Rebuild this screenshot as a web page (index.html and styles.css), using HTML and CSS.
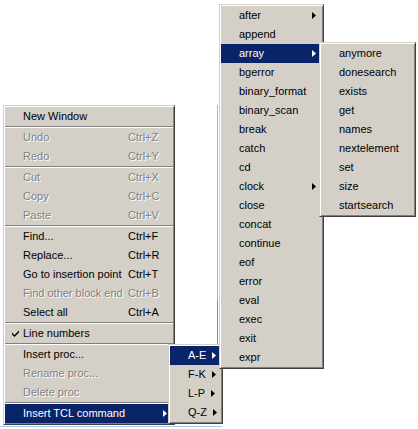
FILE: index.html
```html
<!DOCTYPE html>
<html>
<head>
<meta charset="utf-8">
<link rel="stylesheet" href="styles.css">
</head>
<body>
<div class="screen">
  <div class="under-line"></div>
  <div class="under-line under-blue"></div>
  <div class="under-bottom"></div>

  <div class="menu menu-main">
    <div class="item"><span class="mark"></span><span class="label">New Window</span><span class="key"></span></div>
    <div class="sep"></div>
    <div class="item off"><span class="mark"></span><span class="label">Undo</span><span class="key">Ctrl+Z</span></div>
    <div class="item off"><span class="mark"></span><span class="label">Redo</span><span class="key">Ctrl+Y</span></div>
    <div class="sep"></div>
    <div class="item off"><span class="mark"></span><span class="label">Cut</span><span class="key">Ctrl+X</span></div>
    <div class="item off"><span class="mark"></span><span class="label">Copy</span><span class="key">Ctrl+C</span></div>
    <div class="item off"><span class="mark"></span><span class="label">Paste</span><span class="key">Ctrl+V</span></div>
    <div class="sep"></div>
    <div class="item"><span class="mark"></span><span class="label">Find...</span><span class="key">Ctrl+F</span></div>
    <div class="item"><span class="mark"></span><span class="label">Replace...</span><span class="key">Ctrl+R</span></div>
    <div class="item"><span class="mark"></span><span class="label">Go to insertion point</span><span class="key">Ctrl+T</span></div>
    <div class="item off"><span class="mark"></span><span class="label">Find other block end</span><span class="key">Ctrl+B</span></div>
    <div class="item"><span class="mark"></span><span class="label">Select all</span><span class="key">Ctrl+A</span></div>
    <div class="sep"></div>
    <div class="item"><span class="mark"><svg class="check" width="7" height="7" viewBox="0 0 7 7"><path d="M0 2.5 L2.5 5 L7 0.5 L7 2.5 L2.5 7 L0 4.5 Z"/></svg></span><span class="label">Line numbers</span><span class="key"></span></div>
    <div class="sep"></div>
    <div class="item"><span class="mark"></span><span class="label">Insert proc...</span><span class="key"></span></div>
    <div class="item off"><span class="mark"></span><span class="label">Rename proc...</span><span class="key"></span></div>
    <div class="item off"><span class="mark"></span><span class="label">Delete proc</span><span class="key"></span></div>
    <div class="sep"></div>
    <div class="item active"><span class="mark"></span><span class="label">Insert TCL command</span><span class="key sub"><svg class="arrow" width="4" height="7" viewBox="0 0 4 7"><path d="M0 0 L4 3.5 L0 7 Z"/></svg></span></div>
  </div>

  <div class="menu menu-range">
    <div class="item active"><span class="mark"></span><span class="label">A-E</span><span class="sub"><svg class="arrow" width="4" height="7" viewBox="0 0 4 7"><path d="M0 0 L4 3.5 L0 7 Z"/></svg></span></div>
    <div class="item"><span class="mark"></span><span class="label">F-K</span><span class="sub"><svg class="arrow" width="4" height="7" viewBox="0 0 4 7"><path d="M0 0 L4 3.5 L0 7 Z"/></svg></span></div>
    <div class="item"><span class="mark"></span><span class="label">L-P</span><span class="sub"><svg class="arrow" width="4" height="7" viewBox="0 0 4 7"><path d="M0 0 L4 3.5 L0 7 Z"/></svg></span></div>
    <div class="item"><span class="mark"></span><span class="label">Q-Z</span><span class="sub"><svg class="arrow" width="4" height="7" viewBox="0 0 4 7"><path d="M0 0 L4 3.5 L0 7 Z"/></svg></span></div>
  </div>

  <div class="menu menu-tcl">
    <div class="item"><span class="mark"></span><span class="label">after</span><span class="sub"><svg class="arrow" width="4" height="7" viewBox="0 0 4 7"><path d="M0 0 L4 3.5 L0 7 Z"/></svg></span></div>
    <div class="item"><span class="mark"></span><span class="label">append</span><span class="sub"></span></div>
    <div class="item active"><span class="mark"></span><span class="label">array</span><span class="sub"><svg class="arrow" width="4" height="7" viewBox="0 0 4 7"><path d="M0 0 L4 3.5 L0 7 Z"/></svg></span></div>
    <div class="item"><span class="mark"></span><span class="label">bgerror</span><span class="sub"></span></div>
    <div class="item"><span class="mark"></span><span class="label">binary_format</span><span class="sub"></span></div>
    <div class="item"><span class="mark"></span><span class="label">binary_scan</span><span class="sub"></span></div>
    <div class="item"><span class="mark"></span><span class="label">break</span><span class="sub"></span></div>
    <div class="item"><span class="mark"></span><span class="label">catch</span><span class="sub"></span></div>
    <div class="item"><span class="mark"></span><span class="label">cd</span><span class="sub"></span></div>
    <div class="item"><span class="mark"></span><span class="label">clock</span><span class="sub"><svg class="arrow" width="4" height="7" viewBox="0 0 4 7"><path d="M0 0 L4 3.5 L0 7 Z"/></svg></span></div>
    <div class="item"><span class="mark"></span><span class="label">close</span><span class="sub"></span></div>
    <div class="item"><span class="mark"></span><span class="label">concat</span><span class="sub"></span></div>
    <div class="item"><span class="mark"></span><span class="label">continue</span><span class="sub"></span></div>
    <div class="item"><span class="mark"></span><span class="label">eof</span><span class="sub"></span></div>
    <div class="item"><span class="mark"></span><span class="label">error</span><span class="sub"></span></div>
    <div class="item"><span class="mark"></span><span class="label">eval</span><span class="sub"></span></div>
    <div class="item"><span class="mark"></span><span class="label">exec</span><span class="sub"></span></div>
    <div class="item"><span class="mark"></span><span class="label">exit</span><span class="sub"></span></div>
    <div class="item"><span class="mark"></span><span class="label">expr</span><span class="sub"></span></div>
  </div>

  <div class="menu menu-array">
    <div class="item"><span class="mark"></span><span class="label">anymore</span></div>
    <div class="item"><span class="mark"></span><span class="label">donesearch</span></div>
    <div class="item"><span class="mark"></span><span class="label">exists</span></div>
    <div class="item"><span class="mark"></span><span class="label">get</span></div>
    <div class="item"><span class="mark"></span><span class="label">names</span></div>
    <div class="item"><span class="mark"></span><span class="label">nextelement</span></div>
    <div class="item"><span class="mark"></span><span class="label">set</span></div>
    <div class="item"><span class="mark"></span><span class="label">size</span></div>
    <div class="item"><span class="mark"></span><span class="label">startsearch</span></div>
  </div>
</div>
</body>
</html>
```

FILE: styles.css
```css
html, body {
  margin: 0;
  padding: 0;
  background: #ffffff;
}

.screen {
  position: relative;
  width: 418px;
  height: 429px;
  overflow: hidden;
  background: #ffffff;
  font-family: "Liberation Sans", Arial, sans-serif;
  font-size: 11px;
  color: #000000;
}

/* traces of the window lying under the menus */
.under-line {
  position: absolute;
  left: 217px;
  top: 105px;
  width: 1px;
  height: 195px;
  background: #b4b4b4;
}

.under-blue {
  top: 300px;
  height: 45px;
  background: #6d8fc2;
}

.under-bottom {
  position: absolute;
  left: 0;
  top: 426px;
  width: 222px;
  height: 1px;
  background: #a9c6ec;
}

/* popup menus */
.menu {
  position: absolute;
  box-sizing: border-box;
  background: #d4d0c8;
  border: 1px solid;
  border-color: #d4d0c8 #404040 #404040 #d4d0c8;
  box-shadow: inset 1px 1px 0 #ffffff, inset -1px -1px 0 #808080;
  padding: 1px;
}

.menu-main  { left: 3px;   top: 105px; width: 172px; }
.menu-range { left: 168px; top: 344px; width: 55px;  }
.menu-tcl   { left: 219px; top: 4px;   width: 105px; }
.menu-array { left: 319px; top: 42px;  width: 97px;  }

.item {
  display: flex;
  align-items: center;
  height: 19px;
  line-height: 19px;
  white-space: nowrap;
}

.mark {
  flex: none;
  width: 18px;
  display: flex;
  align-items: center;
}

.label {
  flex: 1;
}

.key {
  flex: none;
  width: 45px;
}

.sub {
  flex: none;
  box-sizing: border-box;
  width: 16px;
  display: flex;
  justify-content: flex-end;
  align-items: center;
  padding-right: 6px;
}

.key.sub {
  width: 45px;
}

.arrow {
  display: block;
  fill: #000000;
}

.check {
  display: block;
  margin-left: 7px;
  fill: #000000;
}

.item.off {
  color: #808080;
  text-shadow: 1px 1px 0 #ffffff;
}

.item.active {
  background: #0a246a;
  color: #ffffff;
}

.item.active .arrow {
  fill: #ffffff;
}

.sep {
  height: 0;
  margin: 0 0 0 0;
  border-top: 1px solid #808080;
  border-bottom: 1px solid #ffffff;
}
```
